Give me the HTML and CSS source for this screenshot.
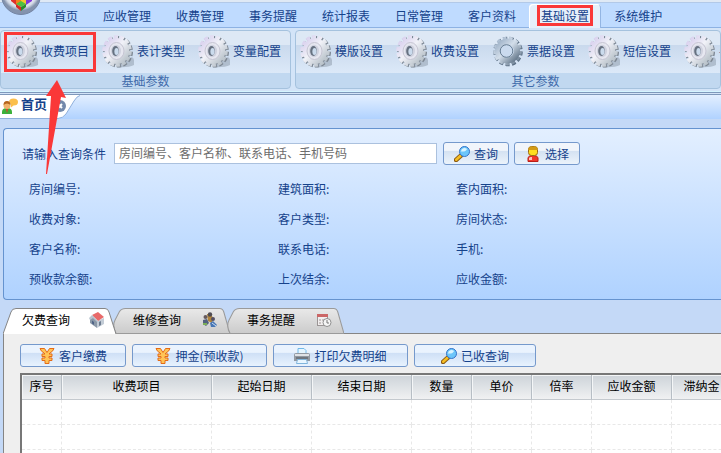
FILE: index.html
```html
<!DOCTYPE html>
<html lang="zh-CN">
<head>
<meta charset="utf-8">
<title>首页</title>
<link rel="stylesheet" href="styles.css">
</head>
<body>
<svg class="defs" aria-hidden="true">
  <defs>
    <linearGradient id="metal" x1="0" y1="0" x2="1" y2="1"><stop offset="0" stop-color="#d3c8ec"/><stop offset=".45" stop-color="#f1f2f8"/><stop offset="1" stop-color="#a9b5bd"/></linearGradient>
    <linearGradient id="steel" x1="0" y1="0" x2="1" y2="1"><stop offset="0" stop-color="#9fb2c8"/><stop offset=".45" stop-color="#d3deea"/><stop offset="1" stop-color="#5f7387"/></linearGradient>
    <linearGradient id="grey" x1="0" y1="0" x2="0" y2="1"><stop offset="0" stop-color="#e9e9e9"/><stop offset="1" stop-color="#cbcbcb"/></linearGradient>
    <radialGradient id="orb" cx=".5" cy=".4"><stop offset=".5" stop-color="#fff"/><stop offset=".85" stop-color="#d5dbe6"/><stop offset="1" stop-color="#8493ad"/></radialGradient>
    <symbol id="gear" viewBox="0 0 32 33">
      <path d="M14 30 30 22q4 4 2 8-6 3-18 2z" fill="#8390a0" opacity=".45"/>
      <ellipse cx="16" cy="16.800" rx="13.200" ry="14" fill="none" stroke="#7d8793" stroke-width="3.600" pathLength="56" stroke-dasharray="2.700 1.300"/>
      <ellipse cx="15.800" cy="16.800" rx="12.500" ry="13" fill="#87919d"/>
      <ellipse cx="15" cy="16" rx="13" ry="14" fill="none" stroke="url(#metal)" stroke-width="3.600" pathLength="56" stroke-dasharray="2.700 1.300"/>
      <ellipse cx="15" cy="16" rx="12.300" ry="13" fill="url(#metal)"/>
      <ellipse cx="14.500" cy="16" rx="7.500" ry="8.500" fill="#e6e7f0" stroke="#c6c5d3"/>
      <ellipse cx="14" cy="16" rx="5" ry="6.200" fill="#d0d2df"/>
      <ellipse cx="13.500" cy="16" rx="3.300" ry="5" fill="#667180"/>
      <ellipse cx="14.500" cy="16.500" rx="2.100" ry="3.600" fill="#cbdbed"/>
    </symbol>
    <symbol id="gear-ring" viewBox="0 0 32 33">
      <circle cx="16" cy="16.500" r="13" fill="none" stroke="#5b6f84" stroke-width="3.600" pathLength="52" stroke-dasharray="2.500 1.500"/>
      <circle cx="15.500" cy="16" r="12.800" fill="none" stroke="url(#steel)" stroke-width="3.200" pathLength="52" stroke-dasharray="2.300 1.700"/>
      <circle cx="15.500" cy="16" r="9.500" fill="none" stroke="url(#steel)" stroke-width="6"/>
      <circle cx="14.500" cy="16" r="6.300" fill="#cadaee" stroke="#667c92"/>
    </symbol>
    <symbol id="lens" viewBox="0 0 16 16">
      <path d="M2 14 7 9.500" stroke="#8a5a12" stroke-width="4.400" stroke-linecap="round"/>
      <path d="M2.200 13.700 6.300 10" stroke="#f5bd23" stroke-width="2.600" stroke-linecap="round"/>
      <circle cx="10.500" cy="5.500" r="5" fill="#6cc6fa" stroke="#3473c8"/>
      <path d="M7 5.500a3.600 3.600 0 0 1 6-2.500q-1 3-6 2.500" fill="#d9f4ff"/>
    </symbol>
    <symbol id="yen" viewBox="0 0 16 16">
      <path d="M1 .500h4.500L8 4.500l2.500-4H15q-1 3-4 4.500L10 6h3v2.500h-3V10h3v2.500h-3v3H6v-3H3V10h3V8.500H3V6h3L5 5Q2 3.500 1 .500z" fill="#ffc457" stroke="#e56b16" stroke-linejoin="round"/>
    </symbol>
  </defs>
</svg>

<header class="ribbon">
  <div class="title-strip"></div>
  <svg class="orb" viewBox="0 0 40 40" aria-hidden="true">
    <circle cx="20" cy="20" r="19.500" fill="url(#orb)" stroke="#7283a2"/>
    <path d="M10 21 15 24v6l-5-4z" fill="#e0302a"/><path d="m15 23 5-3v8l-5 2z" fill="#f3801d"/><path d="m20 20 5 3v7l-5-2z" fill="#f8c62c"/><path d="m25 24 6-3v5l-6 4z" fill="#7f35d8"/><path d="m15 29 5-3 5 3-5 3z" fill="#4fc03f"/><path d="m15 29 5 3v4l-5-4z" fill="#d92a22"/><path d="m20 32 5-3v3l-5 4z" fill="#2d8a2b"/>
  </svg>
  <nav class="menu">
    <a href="#">首页</a><a href="#">应收管理</a><a href="#">收费管理</a><a href="#">事务提醒</a><a href="#">统计报表</a><a href="#">日常管理</a><a href="#">客户资料</a><a href="#" class="active">基础设置</a><a href="#">系统维护</a>
  </nav>
  <div class="groups">
    <section class="group group-basic">
      <div class="tools">
        <button class="tool marked"><svg><use href="#gear"/></svg>收费项目</button>
        <button class="tool"><svg><use href="#gear"/></svg>表计类型</button>
        <button class="tool"><svg><use href="#gear"/></svg>变量配置</button>
      </div>
      <h2>基础参数</h2>
    </section>
    <section class="group group-other">
      <div class="tools">
        <button class="tool"><svg><use href="#gear"/></svg>模版设置</button>
        <button class="tool"><svg><use href="#gear"/></svg>收费设置</button>
        <button class="tool"><svg><use href="#gear-ring"/></svg>票据设置</button>
        <button class="tool"><svg><use href="#gear"/></svg>短信设置</button>
        <button class="tool"><svg><use href="#gear"/></svg>手</button>
      </div>
      <h2>其它参数</h2>
    </section>
  </div>
</header>

<div class="doc-tabs">
  <div class="doc-tab">
    <svg class="tab-shape" viewBox="0 0 82 24" preserveAspectRatio="none" aria-hidden="true"><path d="M0 0H80Q77 1 74 6L66 19Q63 23 58 23.500H0z" fill="#fff"/><path d="M80 .500Q77 1 74 6L66 19Q63 23 58 23.500H0" fill="none" stroke="#8fb0dc"/></svg>
    <svg class="icon" viewBox="0 0 16 16" aria-hidden="true"><path d="M7 4q0-3.500 4.500-3.500T16 4t-4.500 3.500L9 9.500V6.500z" fill="#fbbf4c"/><path d="M0 16v-2q0-4 5-4t5 4v2z" fill="#3cb13b"/><circle cx="5" cy="7.500" r="3.500" fill="#f0b36a"/><path d="M1.500 7q0-4 3.500-4t3.500 4Q5 4 1.500 7" fill="#b5651c"/><path d="m4 11 1 4 1-4z" fill="#e93a2b"/></svg>
    <strong>首页</strong>
    <button class="close" aria-label="关闭"><svg viewBox="0 0 12 12"><circle cx="6" cy="6" r="6" fill="#7389ab"/><path d="m4 4 4 4m0-4L4 8" stroke="#fff" stroke-width="2"/></svg></button>
  </div>
</div>

<main>
  <form class="query">
    <div class="search">
      <label for="q">请输入查询条件</label>
      <input id="q" type="text" placeholder="房间编号、客户名称、联系电话、手机号码">
      <button type="button" class="btn pale"><svg class="icon"><use href="#lens"/></svg>查询</button>
      <button type="button" class="btn pale"><svg class="icon" viewBox="0 0 16 16"><path d="M3 15.500v-4q1-2 5-2t5 2v4z" fill="#f0382c" stroke="#b91c17"/><path d="M4 14v-2q1-1.500 3-1v3z" fill="#ffc3bb"/><rect x="3.500" y=".500" width="9" height="9" rx="3" fill="#ffdf1f" stroke="#9c6a12"/><path d="M3.500 4V3q0-2.500 4.500-2.500T12.500 3v1z" fill="#d39b16"/></svg>选择</button>
    </div>
    <div class="fields">
      <span>房间编号:</span><span>建筑面积:</span><span>套内面积:</span>
      <span>收费对象:</span><span>客户类型:</span><span>房间状态:</span>
      <span>客户名称:</span><span>联系电话:</span><span>手机:</span>
      <span>预收款余额:</span><span>上次结余:</span><span>应收金额:</span>
    </div>
  </form>

  <div class="tabs" role="tablist">
    <button class="tab current" role="tab" aria-selected="true">
      <svg class="tab-shape" viewBox="0 0 113 26" preserveAspectRatio="none"><path d="M0 26 8 4Q9 .500 13 .500H102Q105 .500 106 4L113 26" fill="#fff" stroke="#858585"/></svg>
      <span>欠费查询</span>
      <svg class="icon" viewBox="0 0 16 16"><path d="M1 6v5l7 5V9L4 4z" fill="#8a98a8"/><path d="m8 9 7-3v6l-7 4z" fill="#c3ccd6"/><path d="M3 3 9 0l6 5-6 4z" fill="#e86a6a"/><path d="m0 6 3-3 6 6-1 1-4-4-3 2z" fill="#b9c4cf"/><path d="M3 8.500 5 10v3l-2-1.500z" fill="#4f6386"/><path d="m10 10 2-1v4l-2 1z" fill="#6e7d91"/></svg>
    </button>
    <button class="tab" role="tab">
      <svg class="tab-shape" viewBox="0 0 113 26" preserveAspectRatio="none"><path d="M3 25.500Q-1 18 2 12L6 4Q8 .500 12 .500H103Q106 .500 107 4L113 25.500z" fill="url(#grey)" stroke="#9a9a9a"/></svg>
      <span>维修查询</span>
      <svg class="icon" viewBox="0 0 16 16"><path d="M5 2h4l2 4-1 5-4-2z" fill="#b1853b"/><circle cx="8" cy="2.500" r="2.200" fill="#4f4b52"/><circle cx="3.500" cy="5" r="2" fill="#655a5e"/><path d="m1 8 4-1 2 4-3 3-3-2z" fill="#53617f"/><path d="M1 11h4v2H1z" fill="#7bae58"/><circle cx="11" cy="7" r="2" fill="#555065"/><path d="m8 11 3-2 4 4-2 2H9z" fill="#4776b5"/><path d="m10 11 4 3" stroke="#ccdef2" stroke-width="1"/></svg>
    </button>
    <button class="tab" role="tab">
      <svg class="tab-shape" viewBox="0 0 113 26" preserveAspectRatio="none"><path d="M3 25.500Q-1 18 2 12L6 4Q8 .500 12 .500H103Q106 .500 107 4L113 25.500z" fill="url(#grey)" stroke="#9a9a9a"/></svg>
      <span>事务提醒</span>
      <svg class="icon" viewBox="0 0 16 16"><rect x="1.500" y="2.500" width="10" height="11" fill="#f1eeee" stroke="#9a9494"/><path d="M1 2h11v3H1z" fill="#cb6666"/><path d="M3 7h2v2H3zm3 0h2v2H6zm-3 3h2v2H3z" fill="#c8c2c2"/><circle cx="11" cy="10.500" r="4" fill="#f6f6f6" stroke="#8f8f8f"/><path d="M11 8v3h2" fill="none" stroke="#777"/></svg>
    </button>
  </div>

  <section class="pane">
    <div class="actions">
      <button class="btn"><svg class="icon"><use href="#yen"/></svg>客户缴费</button>
      <button class="btn wide"><svg class="icon"><use href="#yen"/></svg>押金(预收款)</button>
      <button class="btn wide"><svg class="icon" viewBox="0 0 16 16"><path d="M4 6V.500h6l2 2V6z" fill="#e5f5ff" stroke="#71b8e7"/><path d="M0 7q0-2 2-2h12q2 0 2 2v6H0z" fill="#9299a2"/><path d="M1 7h14" stroke="#dfe2e6" stroke-width="2"/><path d="M2 10h12" stroke="#4c535b"/><path d="M3.500 11.500h9l1 4h-11z" fill="#e9f6ff" stroke="#80b5dc"/></svg>打印欠费明细</button>
      <button class="btn mid"><svg class="icon"><use href="#lens"/></svg>已收查询</button>
    </div>
    <div class="grid">
      <table>
        <colgroup><col class="c40"><col class="c150"><col class="c100"><col class="c100"><col class="c60"><col class="c60"><col class="c60"><col class="c80"><col class="c60"></colgroup>
        <thead><tr><th>序号</th><th>收费项目</th><th>起始日期</th><th>结束日期</th><th>数量</th><th>单价</th><th>倍率</th><th>应收金额</th><th>滞纳金</th></tr></thead>
        <tbody>
          <tr><td></td><td></td><td></td><td></td><td></td><td></td><td></td><td></td><td></td></tr>
          <tr><td></td><td></td><td></td><td></td><td></td><td></td><td></td><td></td><td></td></tr>
          <tr><td></td><td></td><td></td><td></td><td></td><td></td><td></td><td></td><td></td></tr>
        </tbody>
      </table>
    </div>
  </section>
</main>

<svg class="arrow" viewBox="0 0 22 94" aria-hidden="true"><path d="M11 0 20 18 15 17 1 94H0L5 16 0 16z" fill="#fa3838"/></svg>
</body>
</html>
```
FILE: styles.css
```css
* { box-sizing: border-box; }
body {
  margin: 0;
  height: 100vh;
  overflow: hidden;
  position: relative;
  display: flex;
  flex-direction: column;
  background: #c4d9f7;
  color: #15428b;
  font: 12px/16px "Noto Sans CJK SC", sans-serif;
}
button, input { font: inherit; color: inherit; }
button { margin: 0; padding: 0; border: 0; background: none; white-space: nowrap; }
.defs { position: absolute; width: 0; height: 0; }
.icon { width: 16px; height: 16px; flex: none; }

.ribbon { position: relative; flex: none; background: #d3e4f8; border-bottom: 3px double #7f98bb; }
.title-strip { height: 3px; background: #dfe9f5; border-bottom: 1px solid #b2c9e8; }
.orb { position: absolute; left: 1px; top: -25px; width: 40px; height: 40px; z-index: 2; }
.menu {
  display: flex;
  gap: 1px;
  height: 25px;
  padding: 1px 0 0 42px;
  background: #bfdbff;
  border-bottom: 1px solid #8db2e3;
}
.menu a { padding: 4px 12px; height: 24px; color: inherit; text-decoration: none; white-space: nowrap; }
.menu .active {
  position: relative;
  background: #e6effa;
  border-radius: 4px 4px 0 0;
  box-shadow: inset 1px 1px #fff, inset -1px 0 #93b5e3;
}
.menu .active::after, .marked::after { content: ""; position: absolute; border: 3px solid #fa3838; }
.menu .active::after { inset: 1px 8px 2px; }

.groups { display: flex; gap: 4px; padding: 2px 0; border-bottom: 1px solid #d5f5ff; }
.group {
  flex: none;
  border: 1px solid #a5c2de;
  border-radius: 4px;
  background: linear-gradient(#dde8f5 0 14px, #c9d9ed 14px, #dce9f8 42px, #c1d8f0 42px);
}
.group-basic { width: 291px; }
.group-other { flex: 1; min-width: 0; overflow: hidden; }
.group-other h2 { padding-left: 55px; }
.tools { display: flex; height: 42px; padding: 3px 0 0 5px; }
.group-other .tools { padding-left: 4px; }
.tool { position: relative; display: flex; align-items: center; gap: 3px; flex: none; width: 96px; height: 34px; }
.tool svg { width: 32px; height: 33px; }
.marked::after { inset: -2px 6px -4px -2px; }
.group h2 { margin: 0; font: inherit; height: 15px; line-height: 16px; text-align: center; color: #3e6aaa; }

.doc-tabs { flex: none; height: 24px; background: linear-gradient(#e3efff, #b0d2ff); }
.doc-tab { position: relative; display: flex; align-items: center; gap: 3px; width: 82px; height: 24px; padding: 0 0 2px 2px; }
.doc-tab > * { position: relative; }
.doc-tab .tab-shape, .tab .tab-shape { position: absolute; inset: 0; width: 100%; height: 100%; }
.doc-tab strong { margin-bottom: 4px; font-size: 13px; }
.close { width: 12px; height: 12px; margin-left: 4px; }
.close svg { display: block; }

main { flex: 1; min-height: 0; display: flex; flex-direction: column; padding: 9px 0 0 3px; }
.query {
  flex: none;
  padding: 13px 0 5px 18px;
  border: 1px solid #6593cf;
  border-right: 0;
  border-radius: 4px 0 0 4px;
  background: linear-gradient(#e3efff, #afd2ff);
}
.search { display: flex; align-items: center; gap: 6px; }
.search label { width: 86px; }
.search input { width: 323px; height: 21px; padding: 0 4px 2px; border: 1px solid #abc1de; background: #fff; }
.search input::placeholder { color: #6d6d6d; opacity: 1; }
.search .btn + .btn { margin-left: -1px; }
.btn {
  display: flex;
  align-items: center;
  justify-content: center;
  gap: 4px;
  width: 106px;
  height: 23px;
  border: 1px solid #7599cc;
  border-radius: 3px;
  background: linear-gradient(#eaf3fe 0 35%, #cfe0f6 40%, #e8f3fe);
}
.btn.pale { width: 66px; background: linear-gradient(#f1f5fb 0 35%, #d5e2f2 40%, #ebf3fb); }
.btn.wide { width: 135px; }
.btn.mid { width: 122px; }
.fields {
  display: grid;
  grid-template-columns: 249px 178px 1fr;
  grid-auto-rows: 30px;
  align-items: center;
  margin: 9px 0 0 7px;
}

.tabs { flex: none; display: flex; height: 34px; padding-top: 8px; }
.tab { position: relative; display: flex; align-items: center; justify-content: space-between; width: 117px; height: 26px; padding: 0 12px 2px 20px; color: #000; }
.tab + .tab { margin-left: -3px; }
.tab.current { width: 113px; padding: 0 11px 2px 19px; z-index: 1; }
.tab > * { position: relative; }
.pane { flex: 1; min-height: 0; display: flex; flex-direction: column; padding: 10px 0 0 16px; background: #efefef; border: solid #858585; border-width: 1px 0 0 1px; }
.tabs + .pane { margin-top: -1px; }
.actions { display: flex; gap: 6px; }
.grid { flex: 1; min-height: 0; margin-top: 6px; overflow: hidden; background: #fff; border: solid #777; border-width: 2px 0 0 2px; }
table { width: 710px; table-layout: fixed; border-collapse: separate; border-spacing: 0; color: #000; }
.c40 { width: 40px; }
.c60 { width: 60px; }
.c80 { width: 80px; }
.c100 { width: 100px; }
.c150 { width: 150px; }
th { height: 25px; padding: 0 0 3px; font-weight: normal; background: linear-gradient(#cdd3d9, #f0f1f2); border-right: 1px solid #b7bec5; border-bottom: 1px solid #c4c9ce; box-shadow: inset 1px 1px #f4f6f7; }
td { height: 25px; padding: 0; border-right: 1px dashed #e8e8e8; border-bottom: 1px dashed #e8e8e8; }

.arrow { position: absolute; left: 46px; top: 80px; width: 22px; height: 94px; z-index: 3; }
```
